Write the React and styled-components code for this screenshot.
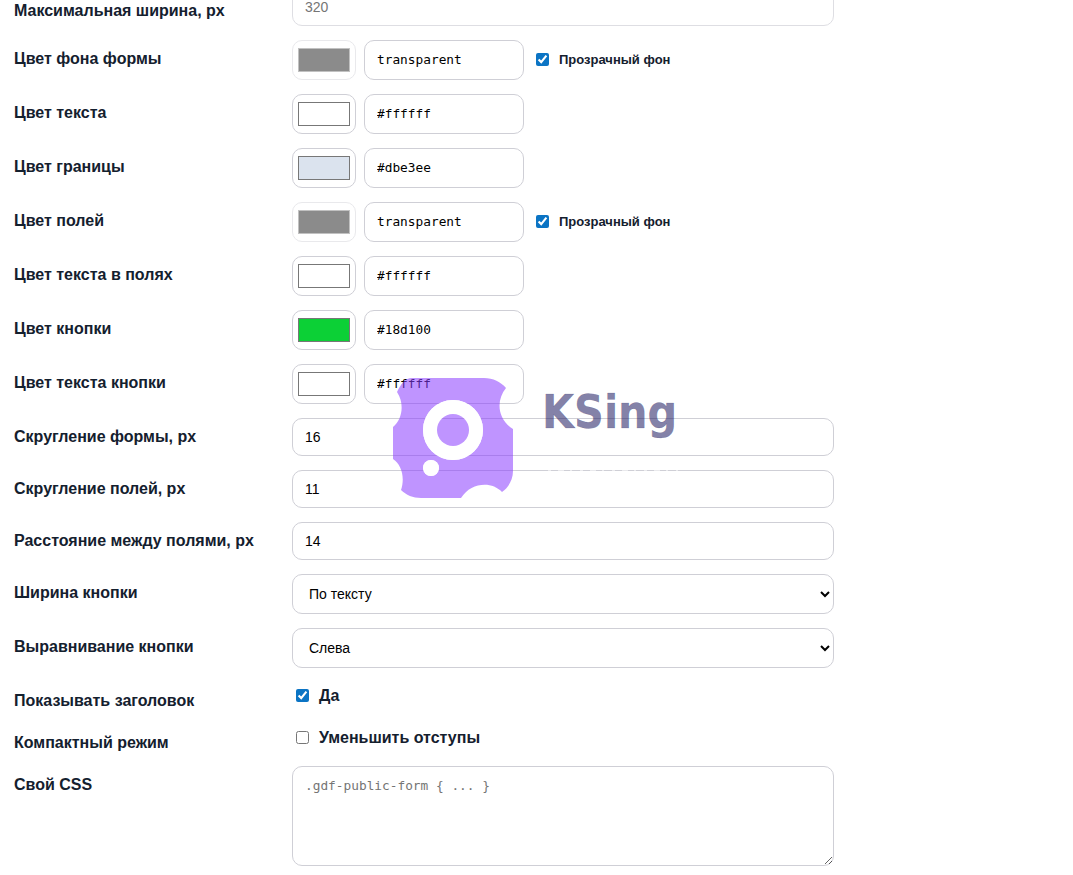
import React from 'react';
import styled, { createGlobalStyle } from 'styled-components';

const colorRows = [
  { label: 'Цвет фона формы', text: 'transparent', swatch: '#000000', transparent: true },
  { label: 'Цвет текста', text: '#ffffff', swatch: '#ffffff' },
  { label: 'Цвет границы', text: '#dbe3ee', swatch: '#dbe3ee' },
  { label: 'Цвет полей', text: 'transparent', swatch: '#000000', transparent: true },
  { label: 'Цвет текста в полях', text: '#ffffff', swatch: '#ffffff' },
  { label: 'Цвет кнопки', text: '#18d100', swatch: '#0cd036' },
  { label: 'Цвет текста кнопки', text: '#ffffff', swatch: '#ffffff' },
];

const numberRows = [
  { label: 'Скругление формы, px', value: '16' },
  { label: 'Скругление полей, px', value: '11' },
  { label: 'Расстояние между полями, px', value: '14' },
];

const selectRows = [
  { label: 'Ширина кнопки', options: ['По тексту', 'На всю ширину'] },
  { label: 'Выравнивание кнопки', options: ['Слева', 'По центру', 'Справа'] },
];

const ColorField = ({ label, text, swatch, transparent }) => (
  <>
    <Label>{label}</Label>
    <ColorControls>
      <ColorInput type="color" defaultValue={swatch} disabled={transparent} />
      <CodeInput defaultValue={text} spellCheck={false} />
      {transparent && (
        <CheckLabel $small>
          <Checkbox defaultChecked />
          Прозрачный фон
        </CheckLabel>
      )}
    </ColorControls>
  </>
);

const Logo = () => (
  <Watermark>
    <LogoMark viewBox="0 0 120 120">
      <path
        fill="#8a3dff"
        fillOpacity="0.55"
        fillRule="evenodd"
        d="M19 0H91C100 0 108 4 113 10C103 22 104 41 120 51V93C120 102 115 110 109 114C99 103 78 104 68 120H28C20 120 13 117 8 112C12 100 9 87 0 81V49C9 42 12 26 4 14C8 6 12 0 19 0ZM60 22A30 30 0 1 0 60 82A30 30 0 1 0 60 22ZM38 82A8 8 0 1 0 38 98A8 8 0 1 0 38 82Z"
      />
      <circle cx="60" cy="52" r="23" fill="none" stroke="#fff" strokeWidth="14" />
      <circle cx="38" cy="90" r="8" fill="#fff" />
      <circle cx="60" cy="52" r="16" fill="#8a3dff" fillOpacity="0.55" />
    </LogoMark>
    <LogoText>
      <LogoName>KSing</LogoName>
      <Shine viewBox="0 0 140 20">
        <path d="M4 1.5h3M24 1.5h3M84 1.5h4" />
        <path d="M6 17.5h130" strokeDasharray="3 7 6 6 2 8" />
      </Shine>
    </LogoText>
  </Watermark>
);

const App = () => {
  return (
    <Page>
      <GlobalStyle />
      <FormGrid>
        <Label $offset={13}>Максимальная ширина, px</Label>
        <TextInput placeholder="320" disabled />

        {colorRows.map((row) => (
          <ColorField key={row.label} {...row} />
        ))}

        {numberRows.map((row) => (
          <React.Fragment key={row.label}>
            <Label>{row.label}</Label>
            <TextInput defaultValue={row.value} />
          </React.Fragment>
        ))}

        {selectRows.map((row) => (
          <React.Fragment key={row.label}>
            <Label>{row.label}</Label>
            <Select>
              {row.options.map((option) => (
                <option key={option}>{option}</option>
              ))}
            </Select>
          </React.Fragment>
        ))}

        <Label>Показывать заголовок</Label>
        <CheckLabel>
          <Checkbox defaultChecked />
          Да
        </CheckLabel>

        <Label>Компактный режим</Label>
        <CheckLabel>
          <Checkbox />
          Уменьшить отступы
        </CheckLabel>

        <Label>Свой CSS</Label>
        <CssArea placeholder=".gdf-public-form { ... }" />
      </FormGrid>
      <Logo />
    </Page>
  );
};

// Styled Components
const GlobalStyle = createGlobalStyle`
  * {
    box-sizing: border-box;
  }

  body {
    margin: 0;
    background: #fff;
    font-family: 'Liberation Sans', Arial, sans-serif;
    overflow: hidden;
  }
`;

const Page = styled.div`
  position: relative;
  height: 875px;
  overflow: hidden;
`;

const FormGrid = styled.div`
  display: grid;
  grid-template-columns: 264px 542px;
  gap: 14px;
  align-items: start;
  margin: -12px 0 0 14px;
`;

const Label = styled.div`
  padding-top: ${({ $offset = 9 }) => $offset}px;
  color: #14202e;
  font-size: 16px;
  font-weight: 700;
  line-height: 19px;
  white-space: nowrap;
`;

const TextInput = styled.input`
  width: 100%;
  height: 38px;
  margin: 0;
  padding: 0 12px;
  border: 1px solid #cfcfd6;
  border-radius: 10px;
  background: #fff;
  color: #000;
  font-family: inherit;
  font-size: 14px;

  &::placeholder {
    color: #757575;
  }

  &:disabled {
    border-color: #dedee3;
  }
`;

const CodeInput = styled(TextInput)`
  width: 160px;
  height: 40px;
  padding-bottom: 2px;
  font-family: 'DejaVu Sans Mono', monospace;
  font-size: 12.8px;
`;

const ColorControls = styled.div`
  display: flex;
  align-items: center;
  gap: 8px;
`;

const ColorInput = styled.input`
  width: 64px;
  height: 40px;
  margin: 0;
  padding: 3px;
  border: 1px solid #cfcfd6;
  border-radius: 10px;
  background: #fff;

  &:disabled {
    opacity: 0.45;
  }
`;

const Select = styled.select`
  width: 100%;
  height: 40px;
  margin: 0;
  padding: 0 0 0 12px;
  border: 1px solid #cfcfd6;
  border-radius: 10px;
  background: #fff;
  color: #000;
  font-family: inherit;
  font-size: 14px;
`;

const CheckLabel = styled.label`
  display: flex;
  align-items: center;
  gap: 10px;
  height: 28px;
  padding-left: 4px;
  padding-bottom: ${({ $small }) => ($small ? '2px' : '0')};
  color: #14202e;
  font-size: ${({ $small }) => ($small ? '13px' : '16px')};
  font-weight: 700;
  white-space: nowrap;

  input {
    margin-bottom: ${({ $small }) => ($small ? '0' : '2px')};
  }
`;

const Checkbox = styled.input.attrs({ type: 'checkbox' })`
  width: 13px;
  height: 13px;
  margin: 0;
  accent-color: #0b74c4;
`;

const CssArea = styled.textarea`
  display: block;
  width: 100%;
  height: 100px;
  margin: 0;
  padding: 10px 12px;
  border: 1px solid #cfcfd6;
  border-radius: 10px;
  background: #fff;
  font-family: 'DejaVu Sans Mono', monospace;
  font-size: 12.8px;
  line-height: 18px;

  &::placeholder {
    color: #757575;
  }
`;

const Watermark = styled.div`
  position: absolute;
  left: 393px;
  top: 378px;
  display: flex;
  gap: 29px;
  pointer-events: none;
`;

const LogoMark = styled.svg`
  width: 120px;
  height: 120px;
`;

const LogoText = styled.div`
  padding-top: 6px;
`;

const LogoName = styled.div`
  color: rgba(24, 20, 92, 0.55);
  font-family: 'DejaVu Sans Condensed', 'DejaVu Sans', sans-serif;
  font-size: 46px;
  font-stretch: condensed;
  font-weight: 700;
  line-height: 56px;
  -webkit-text-stroke: 0.4px rgba(24, 20, 92, 0.3);
`;

const Shine = styled.svg`
  display: block;
  width: 140px;
  height: 20px;
  margin-top: 13px;
  fill: none;
  stroke: #fff;
  stroke-opacity: 0.55;
`;

export default App;
